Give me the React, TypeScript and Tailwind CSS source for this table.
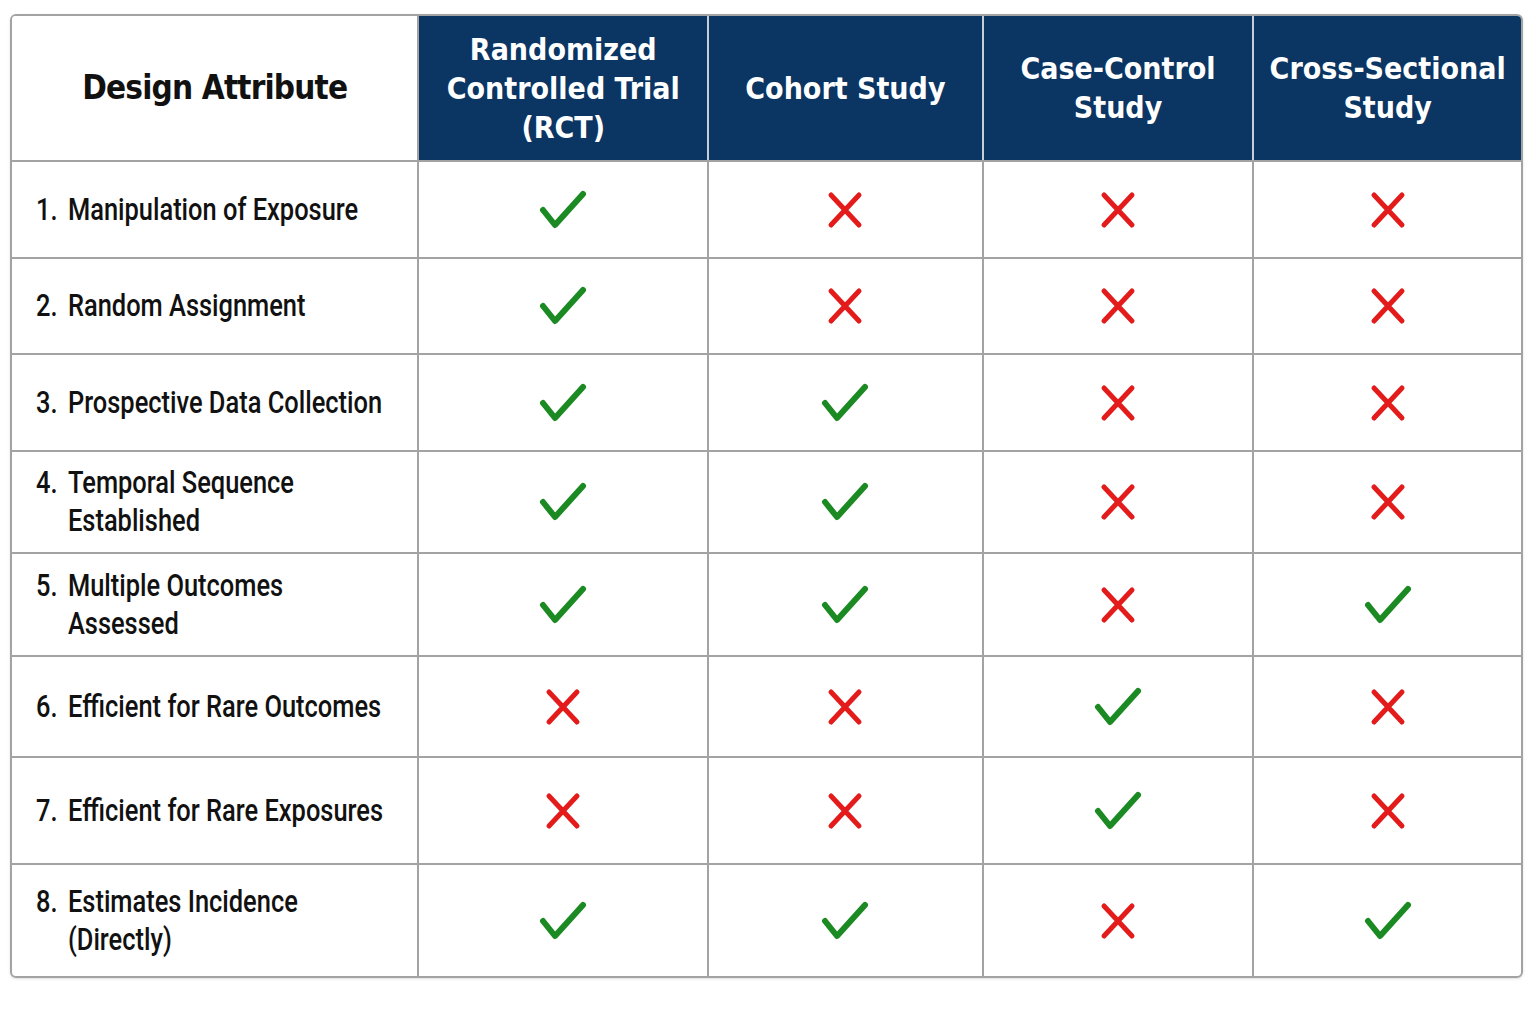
import React from 'react';

const studies = [
  ['Randomized', 'Controlled Trial', '(RCT)'],
  ['Cohort Study'],
  ['Case-Control', 'Study'],
  ['Cross-Sectional', 'Study'],
];

const colWidths = ['w-[290px]', 'w-[275px]', 'w-[271px]', 'w-[267px]'];

// true = check, false = cross
const rows: { num: string; label: string[]; h: string; marks: boolean[] }[] = [
  { num: '1.', label: ['Manipulation of Exposure'], h: 'h-[97px]', marks: [true, false, false, false] },
  { num: '2.', label: ['Random Assignment'], h: 'h-[96px]', marks: [true, false, false, false] },
  { num: '3.', label: ['Prospective Data Collection'], h: 'h-[97px]', marks: [true, true, false, false] },
  { num: '4.', label: ['Temporal Sequence', 'Established'], h: 'h-[102px]', marks: [true, true, false, false] },
  { num: '5.', label: ['Multiple Outcomes', 'Assessed'], h: 'h-[103px]', marks: [true, true, false, true] },
  { num: '6.', label: ['Efficient for Rare Outcomes'], h: 'h-[101px]', marks: [false, false, true, false] },
  { num: '7.', label: ['Efficient for Rare Exposures'], h: 'h-[107px]', marks: [false, false, true, false] },
  { num: '8.', label: ['Estimates Incidence', '(Directly)'], h: 'h-[111px]', marks: [true, true, false, true] },
];

function Check() {
  return (
    <svg width="48" height="42" viewBox="0 0 48 42" fill="none">
      <path d="M4 21 L16 36 L44 5" stroke="#1b8a22" strokeWidth="6" strokeLinecap="round" strokeLinejoin="round" />
    </svg>
  );
}

function Cross() {
  return (
    <svg width="36" height="38" viewBox="0 0 36 38" fill="none">
      <path d="M4 4 L32 34 M32 4 L4 34" stroke="#e31b1b" strokeWidth="5" strokeLinecap="round" />
    </svg>
  );
}

export default function App() {
  return (
    <div className="min-h-screen bg-white pt-[14px] pl-[10px]">
      <div className="w-[1513px] rounded-md border-2 border-[#a3a3a3] overflow-hidden shadow-sm">
        {/* header */}
        <div className="flex h-[146px] border-b-2 border-[#a3a3a3] font-['DejaVu_Sans_Condensed','DejaVu_Sans',sans-serif] font-stretch-condensed">
          <div className="w-[408px] flex items-center justify-center border-r-2 border-[#a3a3a3] bg-white">
            <span className="text-[33px] font-bold text-[#111] tracking-tight">Design Attribute</span>
          </div>
          {studies.map((lines, i) => (
            <div
              key={i}
              className={`${colWidths[i]} flex flex-col items-center justify-center bg-[#0b3563] text-white text-[30px] font-bold leading-[39px] ${i < 3 ? 'border-r-2 border-[#c9ced6]' : ''}`}
            >
              {lines.map((l) => (
                <span key={l}>{l}</span>
              ))}
            </div>
          ))}
        </div>

        {/* body */}
        {rows.map((row, ri) => (
          <div key={row.num} className={`flex ${row.h} ${ri < rows.length - 1 ? 'border-b-2 border-[#a3a3a3]' : ''}`}>
            <div className="w-[408px] flex items-center pl-[24px] border-r-2 border-[#a3a3a3] overflow-hidden">
              <div className="flex scale-x-[0.82] origin-left whitespace-nowrap font-['Roboto',sans-serif] text-[31px] font-medium text-[#111] leading-[38px]">
                <span className="w-[39px] shrink-0">{row.num}</span>
                <div className="flex flex-col">
                  {row.label.map((l) => (
                    <span key={l}>{l}</span>
                  ))}
                </div>
              </div>
            </div>
            {row.marks.map((m, i) => (
              <div
                key={i}
                className={`${colWidths[i]} flex items-center justify-center ${i < 3 ? 'border-r-2 border-[#a3a3a3]' : ''}`}
              >
                {m ? <Check /> : <Cross />}
              </div>
            ))}
          </div>
        ))}
      </div>
    </div>
  );
}
